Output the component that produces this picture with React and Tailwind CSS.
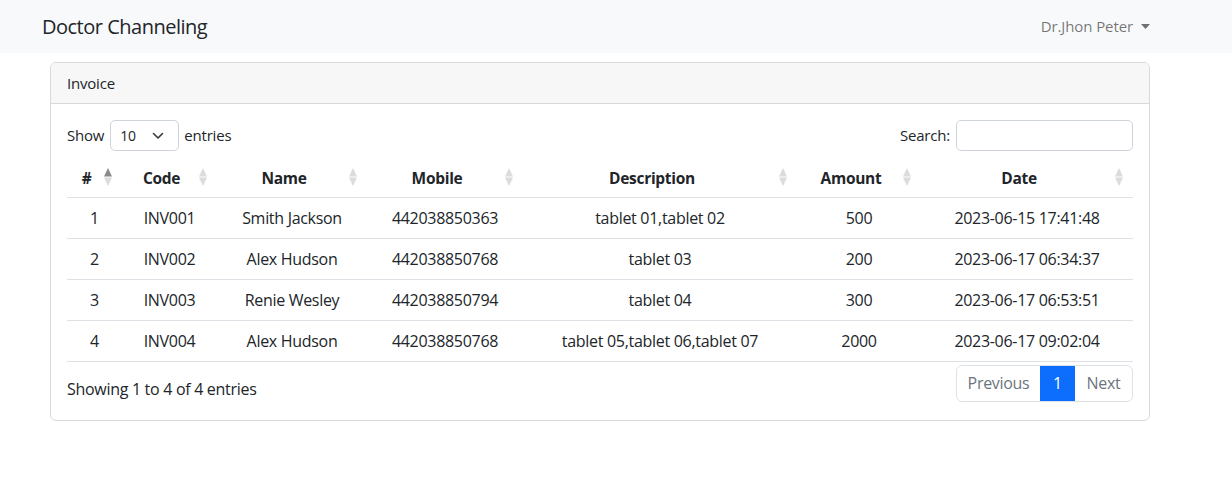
import React from 'react'

const rows = [
  { id: 1, code: 'INV001', name: 'Smith Jackson', mobile: '442038850363', desc: 'tablet 01,tablet 02', amount: '500', date: '2023-06-15 17:41:48' },
  { id: 2, code: 'INV002', name: 'Alex Hudson', mobile: '442038850768', desc: 'tablet 03', amount: '200', date: '2023-06-17 06:34:37' },
  { id: 3, code: 'INV003', name: 'Renie Wesley', mobile: '442038850794', desc: 'tablet 04', amount: '300', date: '2023-06-17 06:53:51' },
  { id: 4, code: 'INV004', name: 'Alex Hudson', mobile: '442038850768', desc: 'tablet 05,tablet 06,tablet 07', amount: '2000', date: '2023-06-17 09:02:04' },
]

const cols = [
  { label: '#', w: 'w-[55px]', active: true },
  { label: 'Code', w: 'w-[95px]' },
  { label: 'Name', w: 'w-[150px]' },
  { label: 'Mobile', w: 'w-[156px]' },
  { label: 'Description', w: 'w-[274px]' },
  { label: 'Amount', w: 'w-[124px]' },
  { label: 'Date', w: 'w-[212px]' },
]

function SortIcon({ active }) {
  return (
    <span className="absolute right-[10px] top-[9px] flex flex-col items-center">
      <svg width="8" height="9" viewBox="0 0 8 9">
        <path d="M4 0 L8 8.5 L0 8.5 Z" fill={active ? '#8a8a8a' : '#dcdcdc'} />
      </svg>
      <svg width="8" height="9" viewBox="0 0 8 9">
        <path d="M0 0.5 L8 0.5 L4 9 Z" fill="#dcdcdc" />
      </svg>
    </span>
  )
}

export default function App() {
  return (
    <div className="min-h-[477px] bg-white text-[#212529] text-base" style={{ fontFamily: '"Open Sans", "Noto Sans", sans-serif' }}>
      <nav className="bg-[#f8f9fa] h-[53px] flex items-center justify-between pl-[42px] pr-[82px]">
        <span className="text-[20px] text-[#212529] tracking-[-0.5px]">Doctor Channeling</span>
        <span className="flex items-center text-[15px] text-[rgba(0,0,0,0.55)] tracking-[-0.1px]">
          Dr.Jhon Peter
          <svg width="9" height="5" viewBox="0 0 9 5" className="ml-[8px]">
            <path d="M0 0 L9 0 L4.5 5 Z" fill="rgba(0,0,0,0.55)" />
          </svg>
        </span>
      </nav>

      <div className="px-[50px] pt-[9px]">
        <div className="w-[1100px] border border-[#d9d9d9] rounded-[6px] overflow-hidden">
          <div className="h-[41px] bg-[#f7f7f7] border-b border-[#d9d9d9] flex items-center px-[16px] text-[15px] tracking-[-0.2px]">
            Invoice
          </div>
          <div className="px-[16px] pt-[16px] pb-[18px]">
            <div className="flex items-center justify-between text-[15px] tracking-[-0.2px]">
              <div className="flex items-center">
                <span>Show</span>
                <div className="ml-[6px] mr-[5px] w-[69px] h-[31px] border border-[#ced4da] rounded-[5px] flex items-center justify-between pl-[9px] pr-[14px] text-[14px]">
                  <span>10</span>
                  <svg width="12" height="8" viewBox="0 0 12 8">
                    <path d="M1.5 1.5 L6 6 L10.5 1.5" fill="none" stroke="#343a40" strokeWidth="1.6" strokeLinecap="round" strokeLinejoin="round" />
                  </svg>
                </div>
                <span>entries</span>
              </div>
              <div className="flex items-center">
                <span>Search:</span>
                <div className="ml-[6px] w-[177px] h-[31px] border border-[#ced4da] rounded-[5px]" />
              </div>
            </div>

            <table className="table-fixed w-[1066px] mt-[8px] border-collapse text-[16px] tracking-[-0.3px]">
              <thead>
                <tr className="border-b border-[#dee2e6]">
                  {cols.map(c => (
                    <th key={c.label} className={`${c.w} relative h-[38px] pt-[1px] text-center font-bold pl-[10px] pr-[26px] text-[15.5px]`}>
                      {c.label}
                      <SortIcon active={c.active} />
                    </th>
                  ))}
                </tr>
              </thead>
              <tbody>
                {rows.map(r => (
                  <tr key={r.id} className="border-b border-[#dee2e6] h-[41px] text-center">
                    <td>{r.id}</td>
                    <td>{r.code}</td>
                    <td>{r.name}</td>
                    <td>{r.mobile}</td>
                    <td>{r.desc}</td>
                    <td>{r.amount}</td>
                    <td>{r.date}</td>
                  </tr>
                ))}
              </tbody>
            </table>

            <div className="flex items-start justify-between mt-[3px] text-[16px] tracking-[-0.3px]">
              <span className="pt-[12px]">Showing 1 to 4 of 4 entries</span>
              <div className="flex h-[37px] border border-[#dee2e6] rounded-[6px] overflow-hidden">
                <span className="w-[83px] flex items-center justify-center text-[#6c757d]">Previous</span>
                <span className="w-[35px] flex items-center justify-center bg-[#0d6efd] text-white">1</span>
                <span className="w-[57px] flex items-center justify-center text-[#6c757d]">Next</span>
              </div>
            </div>
          </div>
        </div>
      </div>
    </div>
  )
}
